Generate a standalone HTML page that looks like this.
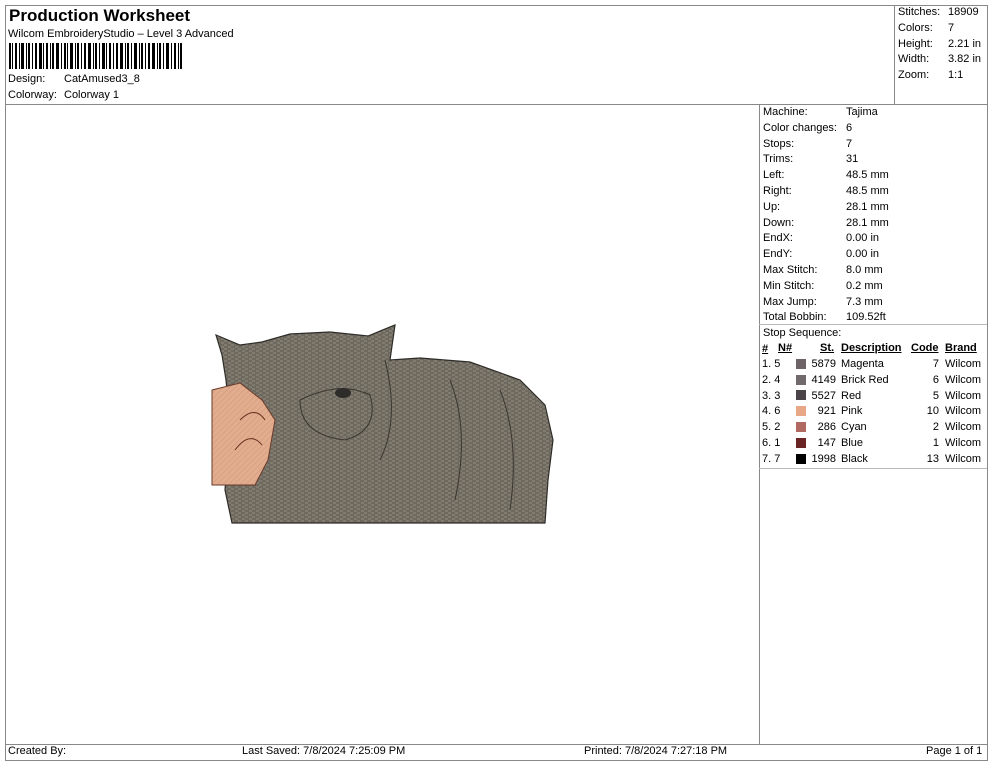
<!DOCTYPE html>
<html><head><meta charset="utf-8"><style>
*{margin:0;padding:0;box-sizing:border-box}
body{width:990px;height:762px;background:#fff;font-family:"Liberation Sans",Arial,sans-serif;color:#000;position:relative;overflow:hidden;font-size:11px}
.a{position:absolute;white-space:nowrap}
.ln{position:absolute;background:#888}
</style></head><body>
<div class="ln" style="left:5px;top:5px;width:983px;height:1px"></div>
<div class="ln" style="left:5px;top:5px;width:1px;height:756px"></div>
<div class="ln" style="left:987px;top:5px;width:1px;height:756px"></div>
<div class="ln" style="left:5px;top:104px;width:983px;height:1px"></div>
<div class="ln" style="left:894px;top:5px;width:1px;height:99px"></div>
<div class="ln" style="left:759px;top:104px;width:1px;height:640px"></div>
<div class="ln" style="left:759px;top:324px;width:228px;height:1px;background:#bbb"></div>
<div class="ln" style="left:759px;top:468px;width:228px;height:1px;background:#bbb"></div>
<div class="ln" style="left:5px;top:744px;width:983px;height:1px"></div>
<div class="ln" style="left:5px;top:760px;width:983px;height:1px"></div>

<div class="a" style="left:9px;top:6px;font-size:17px;font-weight:bold">Production Worksheet</div>
<div class="a" style="left:8px;top:28px">Wilcom EmbroideryStudio – Level 3 Advanced</div>
<svg class="a" style="left:9px;top:43px" width="174" height="26">
<g fill="#000">
<rect x="0" y="0" width="2" height="26"/><rect x="3" y="0" width="1" height="26"/><rect x="6" y="0" width="2" height="26"/><rect x="10" y="0" width="1" height="26"/><rect x="12" y="0" width="3" height="26"/><rect x="17" y="0" width="1" height="26"/><rect x="19" y="0" width="2" height="26"/><rect x="23" y="0" width="1" height="26"/><rect x="26" y="0" width="2" height="26"/><rect x="30" y="0" width="3" height="26"/><rect x="34" y="0" width="1" height="26"/><rect x="37" y="0" width="2" height="26"/><rect x="41" y="0" width="1" height="26"/><rect x="43" y="0" width="2" height="26"/><rect x="47" y="0" width="3" height="26"/><rect x="52" y="0" width="1" height="26"/><rect x="55" y="0" width="2" height="26"/><rect x="58" y="0" width="1" height="26"/><rect x="61" y="0" width="3" height="26"/><rect x="66" y="0" width="1" height="26"/><rect x="68" y="0" width="2" height="26"/><rect x="72" y="0" width="1" height="26"/><rect x="75" y="0" width="2" height="26"/><rect x="79" y="0" width="3" height="26"/><rect x="84" y="0" width="1" height="26"/><rect x="86" y="0" width="2" height="26"/><rect x="90" y="0" width="1" height="26"/><rect x="93" y="0" width="3" height="26"/><rect x="97" y="0" width="1" height="26"/><rect x="100" y="0" width="2" height="26"/><rect x="104" y="0" width="1" height="26"/><rect x="107" y="0" width="2" height="26"/><rect x="111" y="0" width="3" height="26"/><rect x="116" y="0" width="1" height="26"/><rect x="118" y="0" width="2" height="26"/><rect x="122" y="0" width="1" height="26"/><rect x="125" y="0" width="3" height="26"/><rect x="130" y="0" width="1" height="26"/><rect x="132" y="0" width="2" height="26"/><rect x="136" y="0" width="1" height="26"/><rect x="139" y="0" width="2" height="26"/><rect x="143" y="0" width="3" height="26"/><rect x="148" y="0" width="1" height="26"/><rect x="150" y="0" width="2" height="26"/><rect x="154" y="0" width="1" height="26"/><rect x="157" y="0" width="3" height="26"/><rect x="162" y="0" width="1" height="26"/><rect x="165" y="0" width="2" height="26"/><rect x="169" y="0" width="1" height="26"/><rect x="171" y="0" width="2" height="26"/>
</g></svg>
<div class="a" style="left:8px;top:73px">Design:</div><div class="a" style="left:64px;top:73px">CatAmused3_8</div>
<div class="a" style="left:8px;top:89px">Colorway:</div><div class="a" style="left:64px;top:89px">Colorway 1</div>

<div class="a" style="left:898px;top:5px;line-height:15.8px">Stitches:<br>Colors:<br>Height:<br>Width:<br>Zoom:</div>
<div class="a" style="left:948px;top:5px;line-height:15.8px">18909<br>7<br>2.21 in<br>3.82 in<br>1:1</div>

<div class="a" style="left:763px;top:105px;line-height:15.8px">Machine:<br>Color changes:<br>Stops:<br>Trims:<br>Left:<br>Right:<br>Up:<br>Down:<br>EndX:<br>EndY:<br>Max Stitch:<br>Min Stitch:<br>Max Jump:<br>Total Bobbin:<br>Stop Sequence:</div>
<div class="a" style="left:846px;top:105px;line-height:15.8px">Tajima<br>6<br>7<br>31<br>48.5 mm<br>48.5 mm<br>28.1 mm<br>28.1 mm<br>0.00 in<br>0.00 in<br>8.0 mm<br>0.2 mm<br>7.3 mm<br>109.52ft</div>

<div class="a" style="left:762px;top:342px;font-weight:bold;text-decoration:underline;line-height:15.8px">#</div>
<div class="a" style="left:778px;top:342px;font-weight:bold;text-decoration:underline">N#</div>
<div class="a" style="left:820px;top:342px;font-weight:bold;text-decoration:underline">St.</div>
<div class="a" style="left:841px;top:342px;font-weight:bold;text-decoration:underline">Description</div>
<div class="a" style="left:911px;top:342px;font-weight:bold;text-decoration:underline">Code</div>
<div class="a" style="left:945px;top:342px;font-weight:bold;text-decoration:underline">Brand</div>
<div class="a" style="left:762px;top:357px;line-height:15.8px">1. 5<br>2. 4<br>3. 3<br>4. 6<br>5. 2<br>6. 1<br>7. 7</div>
<div class="a" style="left:806px;top:357px;line-height:15.8px;text-align:right;width:30px">5879<br>4149<br>5527<br>921<br>286<br>147<br>1998</div>
<div class="a" style="left:841px;top:357px;line-height:15.8px">Magenta<br>Brick Red<br>Red<br>Pink<br>Cyan<br>Blue<br>Black</div>
<div class="a" style="left:910px;top:357px;line-height:15.8px;text-align:right;width:29px">7<br>6<br>5<br>10<br>2<br>1<br>13</div>
<div class="a" style="left:945px;top:357px;line-height:15.8px">Wilcom<br>Wilcom<br>Wilcom<br>Wilcom<br>Wilcom<br>Wilcom<br>Wilcom</div>
<div class="a" style="left:796px;top:359px;width:10px;height:10px;background:#6e6468"></div>
<div class="a" style="left:796px;top:375px;width:10px;height:10px;background:#716a6c"></div>
<div class="a" style="left:796px;top:390px;width:10px;height:10px;background:#4a4448"></div>
<div class="a" style="left:796px;top:406px;width:10px;height:10px;background:#e8a888"></div>
<div class="a" style="left:796px;top:422px;width:10px;height:10px;background:#b06a62"></div>
<div class="a" style="left:796px;top:438px;width:10px;height:10px;background:#6a2424"></div>
<div class="a" style="left:796px;top:454px;width:10px;height:10px;background:#000"></div>

<svg class="a" style="left:0;top:0" width="760" height="744">
<defs><pattern id="fur" width="7" height="4" patternUnits="userSpaceOnUse"><rect width="7" height="4" fill="#6e695f"/><path d="M0 1h3M4 3h3" stroke="#948d80" stroke-width="1"/></pattern>
<pattern id="skin" width="4" height="4" patternUnits="userSpaceOnUse" patternTransform="rotate(45)"><rect width="4" height="4" fill="#e2ad8f"/><path d="M0 0v4" stroke="#cf9576" stroke-width="1"/></pattern></defs>
<path d="M216 335 L240 345 L262 342 L290 334 L330 332 L368 336 L395 325 L390 360 L420 358 L470 362 L520 380 L545 405 L553 440 L548 480 L545 523 L232 523 L225 490 L230 420 L226 380 L222 355 Z" fill="url(#fur)" stroke="#2e2c28" stroke-width="1.2"/>
<path d="M212 390 L240 383 L262 400 L275 420 L268 460 L255 485 L212 485 Z" fill="url(#skin)" stroke="#6a3a2a"/>
<path d="M240 420 Q255 405 265 420 M235 450 Q250 430 262 445" fill="none" stroke="#6a3020"/>
<path d="M300 400 Q340 380 370 395 Q380 430 345 440 Q300 435 300 400Z M385 360 Q400 420 380 460 M450 380 Q470 430 455 500 M500 390 Q520 440 510 510" fill="none" stroke="#3a3630" stroke-width="1"/>
<ellipse cx="343" cy="393" rx="8" ry="5" fill="#2e2c2a"/>
</svg>

<div class="a" style="left:8px;top:745px">Created By:</div>
<div class="a" style="left:242px;top:745px">Last Saved: 7/8/2024 7:25:09 PM</div>
<div class="a" style="left:584px;top:745px">Printed: 7/8/2024 7:27:18 PM</div>
<div class="a" style="left:926px;top:745px">Page 1 of 1</div>
</body></html>
